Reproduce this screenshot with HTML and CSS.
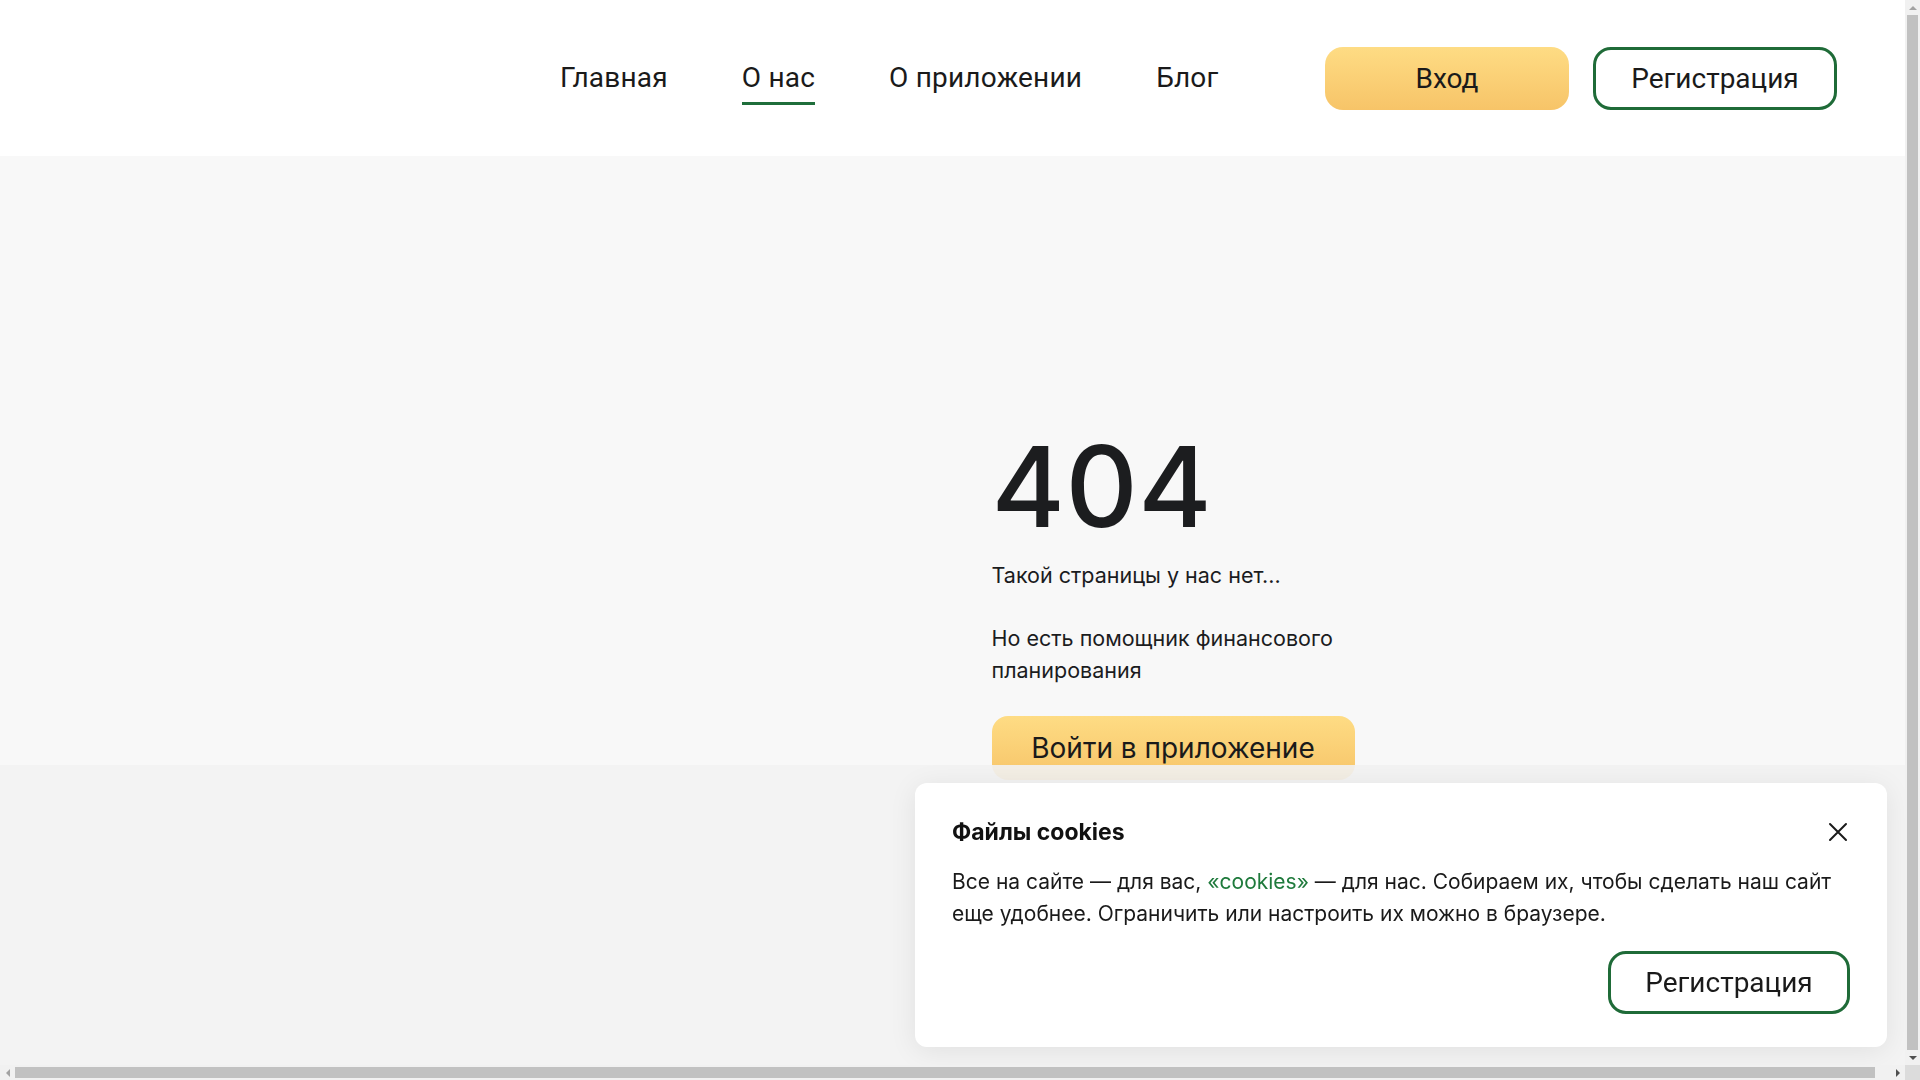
FILE: index.html
```html
<!DOCTYPE html>
<html lang="ru">
<head>
<meta charset="utf-8">
<title>404</title>
<link rel="stylesheet" href="styles.css">
</head>
<body>
<div class="page">
  <header class="header">
    <nav class="nav">
      <a class="nav-link" href="#">Главная</a>
      <a class="nav-link active" href="#">О нас</a>
      <a class="nav-link" href="#">О приложении</a>
      <a class="nav-link" href="#">Блог</a>
    </nav>
    <div class="actions">
      <a class="btn btn-yellow" href="#">Вход</a>
      <a class="btn btn-outline" href="#">Регистрация</a>
    </div>
  </header>
  <main class="main">
    <div class="illustration"></div>
    <section class="content">
      <h1 class="code">404</h1>
      <p class="lead">Такой страницы у нас нет...</p>
      <p class="text">Но есть помощник финансового планирования</p>
      <a class="btn-app" href="#">Войти в приложение</a>
    </section>
  </main>
</div>
<div class="bottom-fade"></div>
<div class="cookie">
  <div class="cookie-head">
    <h2 class="cookie-title">Файлы cookies</h2>
    <button class="cookie-close" aria-label="Закрыть">
      <svg width="20" height="20" viewBox="0 0 20 20"><path d="M2 2 L18 18 M18 2 L2 18" stroke="#1a1a1a" stroke-width="2" fill="none" stroke-linecap="round"/></svg>
    </button>
  </div>
  <p class="cookie-text">Все на сайте — для вас, <a class="cookie-link" href="#">«cookies»</a> — для нас. Собираем их, чтобы сделать наш сайт еще удобнее. Ограничить или настроить их можно в браузере.</p>
  <div class="cookie-actions">
    <a class="btn btn-outline" href="#">Регистрация</a>
  </div>
</div>
<div class="vscroll">
  <span class="arrow arrow-up"></span>
  <span class="vthumb"></span>
  <span class="arrow arrow-down"></span>
</div>
<div class="hscroll">
  <span class="arrow arrow-left"></span>
  <span class="hthumb"></span>
  <span class="arrow arrow-right"></span>
</div>
<div class="scroll-corner"></div>
</body>
</html>
```
FILE: styles.css
```css
* { box-sizing: border-box; }
html, body { margin: 0; padding: 0; overflow: hidden; }
body {
  background: #f8f8f8;
  color: #1b1c1e;
  font-family: Inter, "Noto Sans", sans-serif;
}
.page {
  width: 1905px;
  min-height: 1080px;
  background: #f8f8f8;
}
a { text-decoration: none; color: inherit; }

.header {
  height: 156px;
  background: #fff;
  display: flex;
  align-items: center;
  padding-left: 560px;
  padding-right: 68px;
}
.nav {
  display: flex;
  gap: 74px;
  font-family: Roboto, "Liberation Sans", sans-serif;
  font-size: 28px;
  letter-spacing: 0.2px;
  color: #1a1a1a;
}
.nav-link {
  position: relative;
  line-height: 32px;
}
.nav-link.active::after {
  content: "";
  position: absolute;
  left: 0; right: 0;
  bottom: -11px;
  height: 3px;
  background: #1f6e3b;
}
.actions {
  margin-left: auto;
  display: flex;
  gap: 24px;
}
.btn {
  display: flex;
  align-items: center;
  justify-content: center;
  width: 244px;
  height: 63px;
  border-radius: 18px;
  font-family: Roboto, "Liberation Sans", sans-serif;
  font-size: 28px;
  color: #1a1a1a;
}
.btn-yellow {
  background: linear-gradient(180deg, #fedc84 0%, #f7c468 100%);
}
.btn-outline {
  border: 3px solid #1f6b38;
  background: #fff;
}

.main {
  display: grid;
  grid-template-columns: 1fr 1fr;
  column-gap: 78px;
  padding-top: 274px;
}
.content {
  width: 400px;
}
.code {
  margin: 0;
  font-size: 112px;
  font-weight: 500;
  line-height: 112px;
  color: #1c1d1f;
  letter-spacing: 0.5px;
}
.lead {
  margin: 17px 0 0;
  font-size: 21.5px;
  line-height: 32px;
}
.text {
  margin: 31px 0 0;
  font-size: 21.5px;
  line-height: 32px;
  width: 370px;
}
.btn-app {
  margin-top: 30px;
  display: flex;
  align-items: center;
  justify-content: center;
  width: 363px;
  height: 64px;
  border-radius: 16px;
  background: linear-gradient(180deg, #fedc84 0%, #f7c468 100%);
  font-size: 28px;
  color: #1a1a1a;
}

.bottom-fade {
  position: fixed;
  left: 0; right: 0;
  bottom: 0;
  height: 315px;
  background: rgba(242, 242, 242, 0.9);
}

.cookie {
  position: fixed;
  right: 33px;
  bottom: 33px;
  width: 972px;
  background: #fff;
  border-radius: 12px;
  padding: 33px 37px 33px;
  box-shadow: 0 4px 28px rgba(0, 0, 0, 0.08);
}
.cookie-head {
  display: flex;
  justify-content: space-between;
  align-items: center;
}
.cookie-title {
  margin: 0;
  font-size: 23px;
  font-weight: 700;
  line-height: 32px;
  color: #111;
}
.cookie-close {
  border: 0;
  background: none;
  padding: 0;
  width: 20px;
  height: 20px;
  margin-right: 2px;
}
.cookie-text {
  margin: 18px 0 0;
  font-size: 21px;
  line-height: 32px;
  color: #1a1a1a;
}
.cookie-link { color: #1f7a3c; }
.cookie-actions {
  display: flex;
  justify-content: flex-end;
  margin-top: 21px;
}
.cookie-actions .btn { width: 242px; }

/* emulated browser scrollbars */
.vscroll {
  position: fixed;
  top: 0; right: 0;
  width: 15px;
  height: 1065px;
  background: #f1f1f1;
  display: flex;
  flex-direction: column;
  align-items: center;
}
.vthumb {
  flex: 1;
  width: 11px;
  margin: 0 2px;
  background: #c1c1c1;
}
.hscroll {
  position: fixed;
  left: 0; bottom: 0;
  width: 1905px;
  height: 15px;
  background: #f1f1f1;
  display: flex;
  align-items: center;
}
.hthumb {
  flex: 1;
  height: 11px;
  margin-right: 15px;
  background: #c1c1c1;
}
.scroll-corner {
  position: fixed;
  right: 0; bottom: 0;
  width: 15px; height: 15px;
  background: #dcdcdc;
}
.arrow {
  width: 15px; height: 15px;
  flex: none;
  position: relative;
}
.arrow::before {
  content: "";
  position: absolute;
  left: 50%; top: 50%;
  width: 0; height: 0;
  border: 4px solid transparent;
}
.arrow-up::before { border-bottom-color: #a3a3a3; transform: translate(-50%, -75%); }
.arrow-down::before { border-top-color: #505050; transform: translate(-50%, -25%); }
.arrow-left::before { border-right-color: #a3a3a3; transform: translate(-75%, -50%); }
.arrow-right::before { border-left-color: #505050; transform: translate(-25%, -50%); }
```
